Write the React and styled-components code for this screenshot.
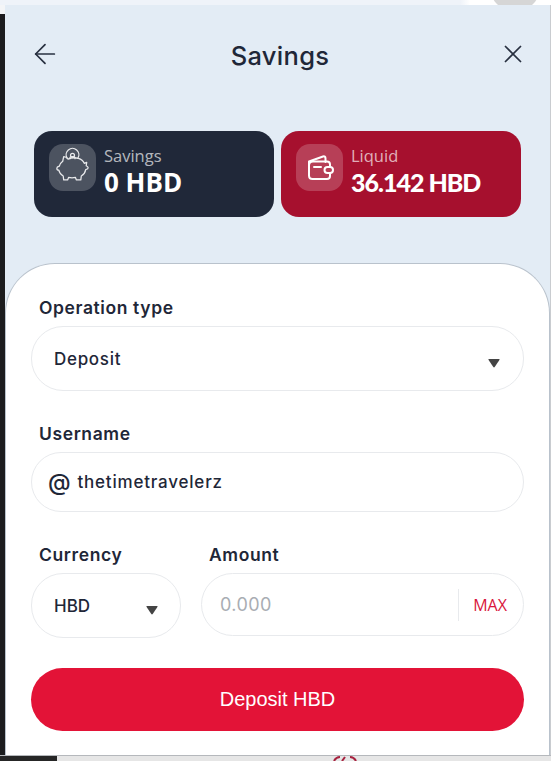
import React from 'react';
import styled, { createGlobalStyle } from 'styled-components';
import { FiArrowLeft, FiX } from 'react-icons/fi';

const GlobalStyle = createGlobalStyle`
  html, body {
    margin: 0;
    padding: 0;
    background: #fff;
  }
  * {
    box-sizing: border-box;
  }
`;

const Screen = styled.div`
  width: 551px;
  height: 761px;
  overflow: hidden;
  display: grid;
  grid-template-columns: 5px 1fr 1px;
  grid-template-rows: 5px 1fr 6px;
  font-family: 'Inter', 'Liberation Sans', sans-serif;
  color: #1f2738;
`;

const TopStrip = styled.div`
  grid-column: 1 / 4;
  background:
    radial-gradient(circle at 515px -14px, #d6d6d6 0 25px, transparent 26px),
    linear-gradient(90deg, #eff3f9 0 460px, #ffffff 470px);
`;

const LeftStrip = styled.div`
  background: linear-gradient(180deg, #f4f5f7 0 9px, #1c1c1e 9px);
`;

const RightStrip = styled.div`
  background: #c9ccd0;
`;

const BottomStrip = styled.div`
  grid-column: 1 / 4;
  display: flex;
  align-items: flex-start;
  padding-left: 333px;
  background: linear-gradient(90deg, #262626 0 57px, #e6e6e6 57px);
  border-top: 1px solid #b5b8bc;
`;

const Modal = styled.div`
  background: #e3ecf5;
  display: flex;
  flex-direction: column;
  min-width: 0;
`;

const Header = styled.div`
  height: 126px;
  padding: 0 22px 28px 24px;
  display: flex;
  align-items: center;
  justify-content: space-between;
`;

const IconButton = styled.button`
  border: none;
  background: none;
  padding: 0;
  display: flex;
  color: #283040;
  font-size: ${p => p.$size}px;
`;

const Title = styled.h1`
  margin: 0 0 0 1px;
  padding-top: 3px;
  font-size: 25.500px;
  font-weight: 500;
  letter-spacing: 0.3px;
  color: #1f2738;
`;

const Balances = styled.div`
  display: flex;
  gap: 7px;
  padding: 0 29px;
`;

const BalanceCard = styled.div`
  flex: 1;
  height: 86px;
  border-radius: 18px;
  padding: 13px 15px;
  display: flex;
  gap: 8px;
  background: ${p => (p.$red ? '#a6102e' : '#202839')};
  color: #fff;
`;

const BalanceIcon = styled.div`
  width: 47px;
  height: 47px;
  border-radius: 14px;
  display: flex;
  align-items: center;
  justify-content: center;
  background: rgba(255, 255, 255, 0.2);
`;

const BalanceText = styled.div`
  display: flex;
  flex-direction: column;
`;

const BalanceLabel = styled.span`
  font-family: 'Open Sans', sans-serif;
  font-size: 16.500px;
  line-height: 24px;
  color: rgba(255, 255, 255, 0.68);
`;

const BalanceValue = styled.span`
  font-family: ${p => (p.$red ? "'Lato'" : "'Open Sans'")}, sans-serif;
  font-size: ${p => (p.$red ? 25 : 26)}px;
  line-height: 29px;
  font-weight: ${p => (p.$red ? 900 : 700)};
  letter-spacing: ${p => (p.$red ? '-1px' : '0')};
`;

const Sheet = styled.form`
  flex: 1;
  margin-top: 46px;
  background: #fff;
  border: 1px solid #b9c2cc;
  border-bottom: none;
  border-radius: 50px 50px 0 0;
  padding: 33px 25px 0;
  display: flex;
  flex-direction: column;
`;

const Field = styled.div`
  display: flex;
  flex-direction: column;
  min-width: 0;
  width: ${p => (p.$width ? `${p.$width}px` : 'auto')};
  flex: ${p => (p.$grow ? 1 : 'none')};
  margin-bottom: ${p => p.$gap || 0}px;
`;

const Label = styled.label`
  font-size: 17.500px;
  line-height: 22px;
  font-weight: 600;
  letter-spacing: 0.6px;
  color: #1f2738;
  padding-left: 8px;
  margin-bottom: 7px;
`;

const Control = styled.div`
  height: ${p => p.$height}px;
  border: 1px solid #e8eaed;
  border-radius: 32px;
  display: flex;
  align-items: center;
  padding-left: ${p => p.$pad || 22}px;
  font-size: 17px;
  font-weight: 500;
  letter-spacing: ${p => p.$spacing || 0}px;
  color: #1f2738;
`;

const Caret = styled.span`
  margin-left: auto;
  margin-right: ${p => p.$right}px;
  margin-top: 8px;
  display: flex;
`;

const AtSign = styled.span`
  font-size: 23px;
  margin-right: 6px;
  line-height: 1;
`;

const Row = styled.div`
  display: flex;
  gap: 20px;
`;

const Placeholder = styled.span`
  flex: 1;
  font-size: 18px;
  font-weight: 400;
  letter-spacing: 0.4px;
  color: #a9adb3;
`;

const MaxButton = styled.span`
  align-self: center;
  height: 32px;
  width: 65px;
  padding-right: 2px;
  border-left: 1px solid #e8eaed;
  display: flex;
  align-items: center;
  justify-content: center;
  font-family: 'Open Sans', sans-serif;
  font-size: 16px;
  font-weight: 400;
  color: #d9163c;
`;

const Submit = styled.button`
  height: 63px;
  margin-top: 30px;
  border: none;
  border-radius: 32px;
  background: #e31337;
  color: #fff;
  font-family: 'Liberation Sans', Arial, sans-serif;
  font-size: 20px;
`;

const PiggyIcon = () => (
  <svg width="47" height="47" viewBox="0 0 48 48" fill="none" stroke="#e8e9eb" strokeWidth="1.300" strokeLinecap="round" strokeLinejoin="round">
    <path d="M15 13c2 0 3.500 1 4.500 2.500 3-1.500 7-1.800 10.500-.8 3 .8 5 2.500 6 5l2.500-1-.5 3.500c1 .5 2 1 2 2s-1 1.500-2.500 2c-.5 3-2 5-4.500 6.500l-.5 4h-4.500l-1-2.500c-2.500.5-4.500.5-7 0l-1 2.500H15l-.5-4c-2.500-1.500-4-3.500-4.500-6-1.500 0-2-1-2-2s1-1.500 2.500-2c.5-2 1.500-3.500 3.500-5z" />
    <path d="M18.500 14.500a6.500 6.500 0 1 1 11 0" />
    <circle cx="24" cy="11.500" r="2" />
    <path d="M21.500 15v-1.500c0-.8 5-.8 5 0V15" />
  </svg>
);

const WalletIcon = () => (
  <svg width="30" height="30" viewBox="0 0 30 30" fill="none" stroke="#fff" strokeWidth="2" strokeLinecap="round" strokeLinejoin="round">
    <path d="M4 13V8.500L18 3.500c1.500-.5 2.500 0 2.500 2V9" />
    <path d="M25 14v-2.500C25 9.500 24 8.500 22 8.500H8c-2.500 0-4 1.500-4 4v10c0 2 1.500 3.500 3.500 3.500H22c2 0 3-1 3-3v-2" />
    <path d="M9 14h7" />
    <path d="M25 14h-2.500a3 3 0 0 0 0 6H25a3 3 0 0 0 0-6z" />
  </svg>
);

const CaretIcon = () => (
  <svg width="12" height="10" viewBox="0 0 12 10">
    <path d="M1 1h10c.5 0 .7.500.4 1L6.700 9c-.4.500-1 .5-1.400 0L.6 2C.3 1.500.5 1 1 1z" fill="#444" />
  </svg>
);

const LogoFragment = () => (
  <svg width="26" height="5" viewBox="0 0 26 5" fill="none" stroke="#a6223f" strokeWidth="2">
    <path d="M1 5c1-2 3-4 6-4" />
    <path d="M9 5l3-4" />
    <path d="M17 1c3 0 5 2 6 4" />
  </svg>
);

export default function App() {
  return (
    <Screen>
      <GlobalStyle />
      <TopStrip />
      <LeftStrip />
      <Modal>
        <Header>
          <IconButton type="button" $size={32}><FiArrowLeft strokeWidth={1.300} /></IconButton>
          <Title>Savings</Title>
          <IconButton type="button" $size={30}><FiX strokeWidth={1.400} /></IconButton>
        </Header>
        <Balances>
          <BalanceCard>
            <BalanceIcon><PiggyIcon /></BalanceIcon>
            <BalanceText>
              <BalanceLabel>Savings</BalanceLabel>
              <BalanceValue>0 HBD</BalanceValue>
            </BalanceText>
          </BalanceCard>
          <BalanceCard $red>
            <BalanceIcon><WalletIcon /></BalanceIcon>
            <BalanceText>
              <BalanceLabel>Liquid</BalanceLabel>
              <BalanceValue $red>36.142 HBD</BalanceValue>
            </BalanceText>
          </BalanceCard>
        </Balances>
        <Sheet>
          <Field $gap={32}>
            <Label>Operation type</Label>
            <Control $height={65} $spacing={0.7}>
              Deposit
              <Caret $right={23}><CaretIcon /></Caret>
            </Control>
          </Field>
          <Field $gap={32}>
            <Label>Username</Label>
            <Control $height={60} $pad={16} $spacing={0.8}>
              <AtSign>@</AtSign>
              thetimetravelerz
            </Control>
          </Field>
          <Row>
            <Field $width={150}>
              <Label>Currency</Label>
              <Control $height={65}>
                HBD
                <Caret $right={22}><CaretIcon /></Caret>
              </Control>
            </Field>
            <Field $grow>
              <Label>Amount</Label>
              <Control $height={63} $pad={18}>
                <Placeholder>0.000</Placeholder>
                <MaxButton>MAX</MaxButton>
              </Control>
            </Field>
          </Row>
          <Submit type="button">Deposit HBD</Submit>
        </Sheet>
      </Modal>
      <RightStrip />
      <BottomStrip><LogoFragment /></BottomStrip>
    </Screen>
  );
}
